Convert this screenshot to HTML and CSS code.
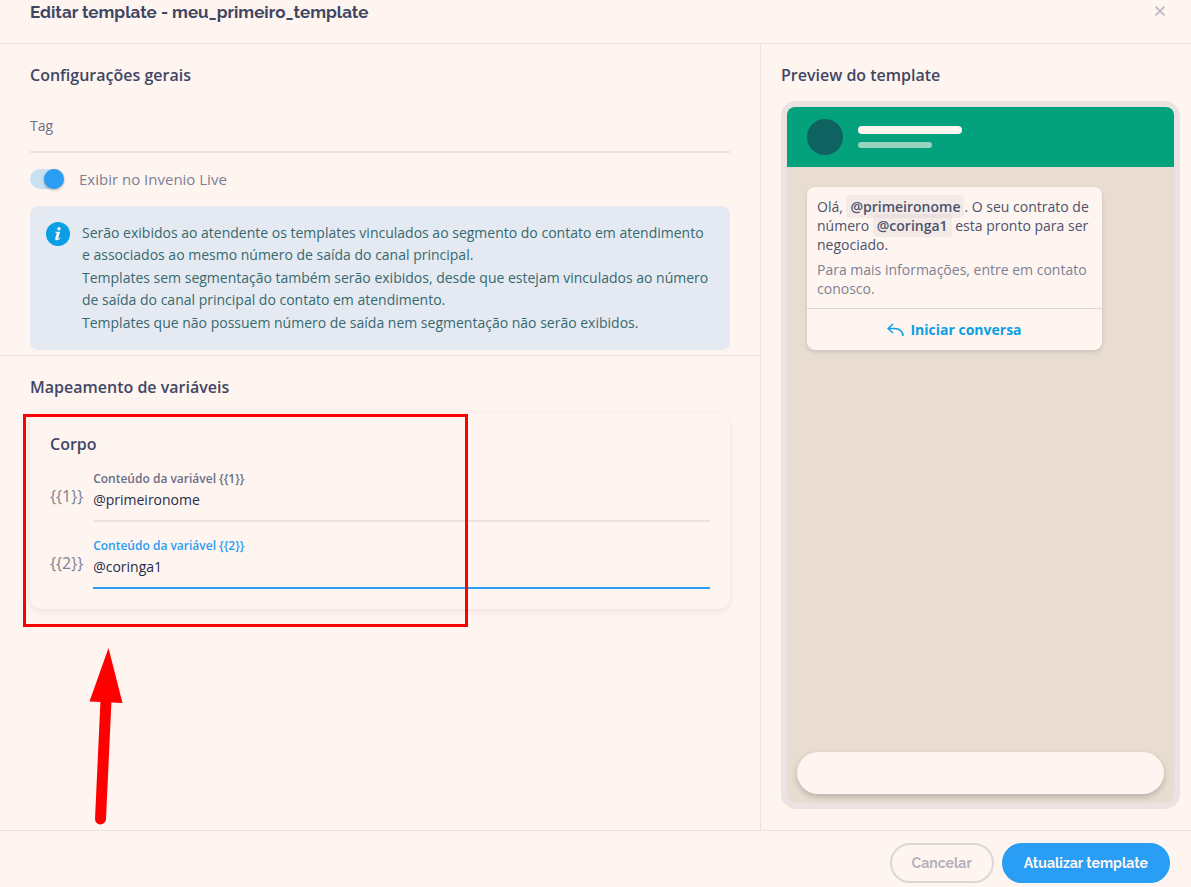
FILE: index.html
```
<!DOCTYPE html>
<html lang="pt-BR">
    <head>
        <meta charset="UTF-8">
        <title>Editar template</title>
        <link rel="stylesheet" href="styles.css">
    </head>
    <body>
        <header class="modal-header">
            <h1>Editar template - meu_primeiro_template</h1>
            <button class="close" type="button" aria-label="Fechar">
                <svg width="12" height="12" viewBox="0 0 12 12"><path d="M1.500 1.500l9 9M10.500 1.500l-9 9"/></svg>
            </button>
        </header>
        <main>
            <form class="settings" id="templateForm">
                <section class="general">
                    <h2>Configurações gerais</h2>
                    <div class="tag-field">
                        <label for="tag">Tag</label>
                        <input id="tag" name="tag" type="text">
                    </div>
                    <div class="toggle">
                        <input id="showLive" name="showLive" type="checkbox" checked>
                        <label for="showLive">Exibir no Invenio Live</label>
                    </div>
                    <div class="info">
                        <svg class="info-icon" width="24" height="24" viewBox="0 0 24 24">
                            <circle cx="12" cy="12" r="12" fill="#0a9ee5"/>
                            <circle cx="13" cy="6.8" r="1.7" fill="#fff5f0"/>
                            <path d="M9.3 9.7h4.8l-1.8 6.4c-.2.8.3.9 1.9-.5l.4.5c-1.4 1.5-2.6 2.2-3.8 2.2-1.4 0-1.9-.9-1.5-2.3l1.3-4.6c.2-.7 0-.9-1.5-.9z" fill="#fff5f0"/>
                        </svg>
                        <p>
                            Serão exibidos ao atendente os templates vinculados ao segmento do contato em atendimento e associados ao mesmo número de saída do canal principal.<br>
                            Templates sem segmentação também serão exibidos, desde que estejam vinculados ao número de saída do canal principal do contato em atendimento.<br>
                            Templates que não possuem número de saída nem segmentação não serão exibidos.
                        </p>
                    </div>
                </section>
                <section class="mapping">
                    <h2>Mapeamento de variáveis</h2>
                    <div class="card">
                        <h3>Corpo</h3>
                        <div class="variable">
                            <span class="token">{{1}}</span>
                            <div class="field">
                                <label for="var1">Conteúdo da variável {{1}}</label>
                                <input id="var1" name="var1" type="text" value="@primeironome">
                            </div>
                        </div>
                        <div class="variable">
                            <span class="token">{{2}}</span>
                            <div class="field active">
                                <label for="var2">Conteúdo da variável {{2}}</label>
                                <input id="var2" name="var2" type="text" value="@coringa1">
                            </div>
                        </div>
                        <svg class="highlight" width="445" height="412" viewBox="0 0 445 412">
                            <rect x="1.5" y="1.5" width="442" height="210" fill="none" stroke="#f00" stroke-width="3"/>
                            <path d="M83 286L77.5 405" stroke="#f00" stroke-width="11" stroke-linecap="round"/>
                            <path d="M85.5 234L66.500 287.500L99.500 289z" fill="#f00"/>
                        </svg>
                    </div>
                </section>
            </form>
            <aside class="preview">
                <h2>Preview do template</h2>
                <div class="phone">
                    <div class="phone-header">
                        <div class="avatar"></div>
                        <div class="contact">
                            <div class="contact-name"></div>
                            <div class="contact-status"></div>
                        </div>
                    </div>
                    <div class="bubble">
                        <div class="message">
                            <p>Olá, <b>@primeironome</b>. O seu contrato de número <b>@coringa1</b> esta pronto para ser negociado.</p>
                            <p class="message-footer">Para mais informações, entre em contato conosco.</p>
                        </div>
                        <button class="reply" type="button">
                            <svg width="17" height="14" viewBox="0 0 17 14"><path d="M6 1L1 5.500l5 4.500M1 5.500h6.500c5 0 8.500 3 8.500 7.500"/></svg>
                            Iniciar conversa
                        </button>
                    </div>
                    <div class="composer"></div>
                </div>
            </aside>
        </main>
        <footer>
            <button class="cancel" type="button">Cancelar</button>
            <button class="save" type="submit" form="templateForm">Atualizar template</button>
        </footer>
    </body>
</html>
```
FILE: styles.css
```
:root {
    --background: #fff5f0;
    --line: #ebe2e1;
    --heading: #3f4664;
    --muted: #7d7f93;
    --blue: #2a9df4;
    --title-font: Raleway, Lato, sans-serif;
}

* {
    box-sizing: border-box;
}

body {
    display: flex;
    flex-direction: column;
    min-height: 100vh;
    margin: 0;
    background-color: var(--background);
    color: var(--heading);
    font: 14px/22px "Open Sans", sans-serif;
}

h1, h2, h3, p {
    margin: 0;
}

h2, h3 {
    font-size: 16px;
    font-weight: 600;
    line-height: 22px;
}

button, input {
    font: inherit;
}

button {
    cursor: pointer;
}

.modal-header {
    display: flex;
    justify-content: space-between;
    align-items: flex-start;
    height: 44px;
    padding: 0 25px 0 30px;
    border-bottom: 1px solid var(--line);
}

h1 {
    font: 700 17px/24px var(--title-font);
}

.close {
    height: 22px;
    padding: 0;
    border: 0;
    background: none;
}

.close svg {
    display: block;
    stroke: #c3bfc8;
    stroke-width: 2;
}

main {
    flex: 1;
    display: grid;
    grid-template-columns: minmax(0, 1fr) 431px;
}

.general {
    padding: 20px 30px 5px;
    border-bottom: 1px solid var(--line);
}

.tag-field {
    display: grid;
    margin-top: 27px;
}

.tag-field label, .tag-field input {
    grid-area: 1 / 1;
}

.tag-field label {
    padding-top: 2px;
    color: #6b6e85;
}

.tag-field input, .field input {
    width: 100%;
    border: 0;
    border-bottom: 2px solid var(--line);
    border-radius: 0;
    outline: 0;
    background: none;
    color: #252b48;
}

.tag-field input {
    height: 40px;
    padding: 2px 0 14px;
}

.toggle {
    display: flex;
    align-items: center;
    gap: 15px;
    height: 20px;
    margin-top: 16px;
    color: var(--muted);
}

.toggle label {
    font-size: 15px;
    line-height: 20px;
}

.toggle input {
    appearance: none;
    width: 34px;
    height: 20px;
    margin: 0;
    border-radius: 10px;
    background-color: #c8e1f0;
}

.toggle input::before {
    content: "";
    display: block;
    width: 20px;
    height: 20px;
    border-radius: 50%;
    background-color: #c3bfc8;
}

.toggle input:checked::before {
    margin-left: auto;
    background-color: var(--blue);
    box-shadow: 0 1px 3px #0005;
}

.info {
    display: flex;
    gap: 12px;
    margin-top: 17px;
    padding: 16px;
    border-radius: 8px;
    background-color: #e5eaf2;
    color: #35696f;
    line-height: 1.6;
}

.info-icon {
    flex: none;
}

.mapping {
    padding: 20px 30px;
}

.card {
    position: relative;
    margin-top: 15px;
    padding: 20px;
    border-radius: 12px;
    box-shadow: 0 2px 6px #c8b4be55;
}

.variable {
    display: flex;
    align-items: center;
    gap: 10px;
    padding-top: 16px;
}

.token {
    color: var(--muted);
    font-size: 16px;
    font-weight: 500;
}

.field {
    flex: 1;
}

.field label {
    display: block;
    color: #6b6e85;
    font-size: 12px;
    font-weight: 600;
    line-height: 16px;
}

.field input {
    display: block;
    height: 35px;
    padding: 2px 0 9px;
}

.field.active label {
    color: var(--blue);
}

.field.active input {
    border-color: var(--blue);
}

.highlight {
    position: absolute;
    top: 1px;
    left: -7px;
    pointer-events: none;
}

.preview {
    display: flex;
    flex-direction: column;
    padding: 20px 11px 21px 20px;
    border-left: 1px solid var(--line);
}

.phone {
    flex: 1;
    display: flex;
    flex-direction: column;
    margin-top: 15px;
    border: 6px solid var(--line);
    border-radius: 15px;
    background-color: #e9ddd1;
}

.phone-header {
    display: flex;
    align-items: center;
    gap: 15px;
    height: 60px;
    padding: 0 20px;
    border-radius: 8px 8px 0 0;
    background-color: #04a27c;
}

.avatar {
    width: 36px;
    height: 36px;
    border-radius: 50%;
    background-color: #0e6360;
}

.contact-name {
    width: 104px;
    height: 8px;
    border-radius: 4px;
    background-color: var(--background);
}

.contact-status {
    width: 74px;
    height: 6px;
    margin-top: 8px;
    border-radius: 3px;
    background-color: #98d3bf;
}

.bubble {
    max-width: 295px;
    margin: 20px;
    border-radius: 8px;
    background-color: var(--background);
    box-shadow: 0 2px 4px #0002;
    line-height: 19px;
}

.message {
    padding: 10px;
    border-bottom: 1px solid #ddd5d8;
    color: #4c526e;
}

.message b {
    padding: 2px 4px;
    border-radius: 4px;
    background-color: #3f46640f;
    font-weight: 600;
}

.message-footer {
    margin-top: 6px;
    color: var(--muted);
}

.reply {
    display: flex;
    justify-content: center;
    align-items: center;
    gap: 6px;
    width: 100%;
    height: 41px;
    padding: 0;
    border: 0;
    background: none;
    color: #0a9ee5;
    font-weight: 700;
}

.reply svg {
    fill: none;
    stroke: #0a9ee5;
    stroke-width: 1.5;
}

.composer {
    height: 42px;
    margin: auto 10px 9px;
    border-radius: 21px;
    background-color: var(--background);
    box-shadow: 0 3px 6px #0003;
}

footer {
    display: flex;
    justify-content: flex-end;
    gap: 8px;
    padding: 12px 21px 4px;
    border-top: 1px solid var(--line);
}

footer button {
    height: 40px;
    padding: 0 20px;
    border: 2px solid #ddd5d8;
    border-radius: 20px;
    font: 700 14px var(--title-font);
}

.cancel {
    background: none;
    color: #b5b2bd;
}

.save {
    border-color: var(--blue);
    background-color: var(--blue);
    color: var(--background);
}
```
